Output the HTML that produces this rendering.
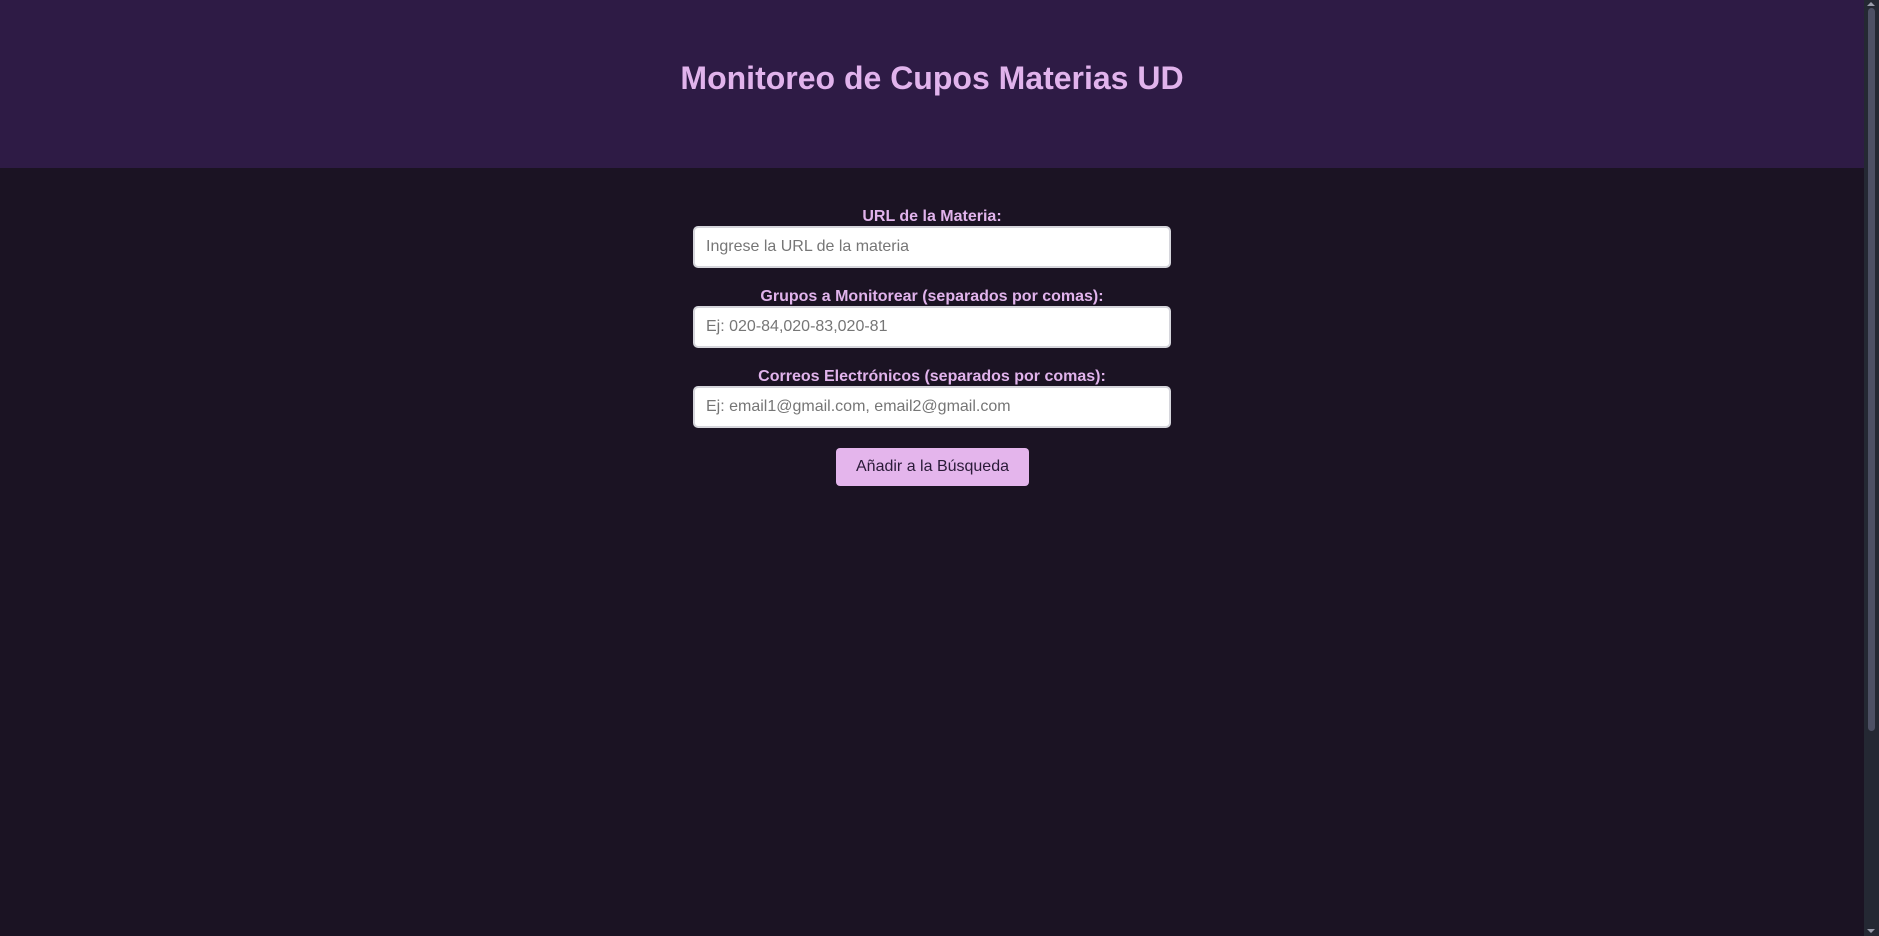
<!DOCTYPE html>
<html><head><meta charset="utf-8"><style>
*{box-sizing:border-box;margin:0;padding:0}
html,body{width:1879px;height:936px;overflow:hidden;background:#1b1323;font-family:"Liberation Sans",Arial,sans-serif}
header{position:absolute;left:0;top:0;width:1864px;height:168px;background:#2e1b45}
h1{position:absolute;left:0;width:1864px;top:60px;text-align:center;color:#e1b3ec;font-size:32px;font-weight:bold;line-height:36px}
.lbl{position:absolute;left:0;width:1864px;text-align:center;color:#e1b3ec;font-size:16px;font-weight:bold;line-height:18px}
.inp{position:absolute;left:693px;width:478px;height:42px;background:#fff;border:2px solid #d6d6dc;border-radius:5px;padding-left:11px;color:#767676;font-size:16px;line-height:38px}
.btn{position:absolute;left:836px;top:448px;width:193px;height:38px;background:#e4b5ec;border-radius:4px;color:#2a1a38;font-size:16px;line-height:38px;text-align:center}
.sb{position:absolute;left:1864px;top:0;width:15px;height:936px;background:#242833}
.th{position:absolute;left:1868px;top:8px;width:7px;height:723px;background:#4d5064;border-radius:4px}
.ar{position:absolute;left:1867px;width:0;height:0;border-left:4px solid transparent;border-right:4px solid transparent}
</style></head><body>
<header><h1>Monitoreo de Cupos Materias UD</h1></header>
<div class="lbl" style="top:208px">URL de la Materia:</div>
<div class="inp" style="top:226px">Ingrese la URL de la materia</div>
<div class="lbl" style="top:288px">Grupos a Monitorear (separados por comas):</div>
<div class="inp" style="top:306px">Ej: 020-84,020-83,020-81</div>
<div class="lbl" style="top:368px">Correos Electrónicos (separados por comas):</div>
<div class="inp" style="top:386px">Ej: email1@gmail.com, email2@gmail.com</div>
<div class="btn">Añadir a la Búsqueda</div>
<div class="sb"></div><div class="th"></div>
<div class="ar" style="top:2px;border-bottom:4px solid #9a9cab"></div>
<div class="ar" style="top:929px;border-top:4px solid #9a9cab"></div>
</body></html>
